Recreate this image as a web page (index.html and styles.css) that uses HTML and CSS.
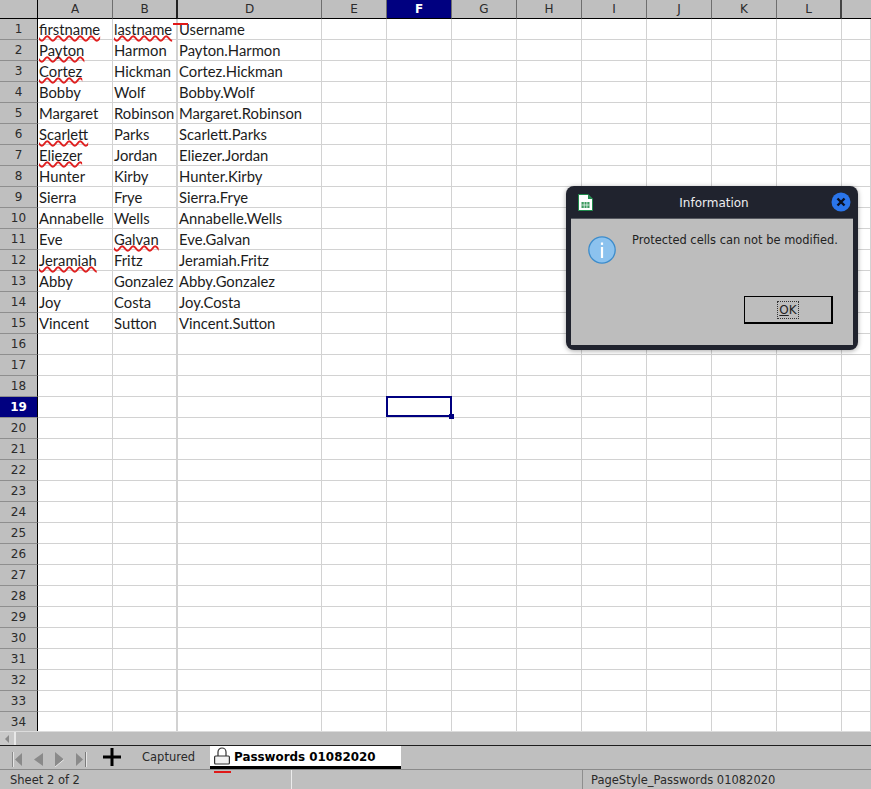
FILE: index.html
```html
<!DOCTYPE html>
<html lang="en">
<head>
    <meta charset="UTF-8">
    <title>Passwords 01082020 - Calc</title>
    <link rel="stylesheet" href="styles.css">
</head>
<body>
    <div class="sheet">
        <table class="grid">
            <colgroup>
                <col class="c-head"><col class="c-a"><col class="c-b"><col class="c-d">
                <col class="c-std"><col class="c-std"><col class="c-std"><col class="c-std">
                <col class="c-std"><col class="c-std"><col class="c-std"><col class="c-std"><col class="c-m">
            </colgroup>
            <thead>
                <tr><th class="corner"></th><th>A</th><th class="hid">B</th><th>D</th><th>E</th><th class="on">F</th><th>G</th><th>H</th><th>I</th><th>J</th><th>K</th><th class="lastcol">L</th><th></th></tr>
            </thead>
            <tbody>
                <tr><th>1</th><td><span class="typo">firstname</span></td><td class="hid"><span class="typo">lastname</span></td><td class="mark-cell"><span class="red-mark"></span>Username</td><td></td><td></td><td></td><td></td><td></td><td></td><td></td><td></td><td></td></tr>
                <tr><th>2</th><td><span class="typo">Payton</span></td><td class="hid">Harmon</td><td>Payton.Harmon</td><td></td><td></td><td></td><td></td><td></td><td></td><td></td><td></td><td></td></tr>
                <tr><th>3</th><td><span class="typo">Cortez</span></td><td class="hid">Hickman</td><td>Cortez.Hickman</td><td></td><td></td><td></td><td></td><td></td><td></td><td></td><td></td><td></td></tr>
                <tr><th>4</th><td>Bobby</td><td class="hid">Wolf</td><td>Bobby.Wolf</td><td></td><td></td><td></td><td></td><td></td><td></td><td></td><td></td><td></td></tr>
                <tr><th>5</th><td>Margaret</td><td class="hid">Robinson</td><td>Margaret.Robinson</td><td></td><td></td><td></td><td></td><td></td><td></td><td></td><td></td><td></td></tr>
                <tr><th>6</th><td><span class="typo">Scarlett</span></td><td class="hid">Parks</td><td>Scarlett.Parks</td><td></td><td></td><td></td><td></td><td></td><td></td><td></td><td></td><td></td></tr>
                <tr><th>7</th><td><span class="typo">Eliezer</span></td><td class="hid">Jordan</td><td>Eliezer.Jordan</td><td></td><td></td><td></td><td></td><td></td><td></td><td></td><td></td><td></td></tr>
                <tr><th>8</th><td>Hunter</td><td class="hid">Kirby</td><td>Hunter.Kirby</td><td></td><td></td><td></td><td></td><td></td><td></td><td></td><td></td><td></td></tr>
                <tr><th>9</th><td>Sierra</td><td class="hid">Frye</td><td>Sierra.Frye</td><td></td><td></td><td></td><td></td><td></td><td></td><td></td><td></td><td></td></tr>
                <tr><th>10</th><td>Annabelle</td><td class="hid">Wells</td><td>Annabelle.Wells</td><td></td><td></td><td></td><td></td><td></td><td></td><td></td><td></td><td></td></tr>
                <tr><th>11</th><td>Eve</td><td class="hid"><span class="typo">Galvan</span></td><td>Eve.Galvan</td><td></td><td></td><td></td><td></td><td></td><td></td><td></td><td></td><td></td></tr>
                <tr><th>12</th><td><span class="typo">Jeramiah</span></td><td class="hid">Fritz</td><td>Jeramiah.Fritz</td><td></td><td></td><td></td><td></td><td></td><td></td><td></td><td></td><td></td></tr>
                <tr><th>13</th><td>Abby</td><td class="hid">Gonzalez</td><td>Abby.Gonzalez</td><td></td><td></td><td></td><td></td><td></td><td></td><td></td><td></td><td></td></tr>
                <tr><th>14</th><td>Joy</td><td class="hid">Costa</td><td>Joy.Costa</td><td></td><td></td><td></td><td></td><td></td><td></td><td></td><td></td><td></td></tr>
                <tr><th>15</th><td>Vincent</td><td class="hid">Sutton</td><td>Vincent.Sutton</td><td></td><td></td><td></td><td></td><td></td><td></td><td></td><td></td><td></td></tr>
                <tr><th>16</th><td></td><td class="hid"></td><td></td><td></td><td></td><td></td><td></td><td></td><td></td><td></td><td></td><td></td></tr>
                <tr><th>17</th><td></td><td class="hid"></td><td></td><td></td><td></td><td></td><td></td><td></td><td></td><td></td><td></td><td></td></tr>
                <tr><th>18</th><td></td><td class="hid"></td><td></td><td></td><td></td><td></td><td></td><td></td><td></td><td></td><td></td><td></td></tr>
                <tr><th class="on">19</th><td></td><td class="hid"></td><td></td><td></td><td class="current"><span class="cursor"></span></td><td></td><td></td><td></td><td></td><td></td><td></td><td></td></tr>
                <tr><th>20</th><td></td><td class="hid"></td><td></td><td></td><td></td><td></td><td></td><td></td><td></td><td></td><td></td><td></td></tr>
                <tr><th>21</th><td></td><td class="hid"></td><td></td><td></td><td></td><td></td><td></td><td></td><td></td><td></td><td></td><td></td></tr>
                <tr><th>22</th><td></td><td class="hid"></td><td></td><td></td><td></td><td></td><td></td><td></td><td></td><td></td><td></td><td></td></tr>
                <tr><th>23</th><td></td><td class="hid"></td><td></td><td></td><td></td><td></td><td></td><td></td><td></td><td></td><td></td><td></td></tr>
                <tr><th>24</th><td></td><td class="hid"></td><td></td><td></td><td></td><td></td><td></td><td></td><td></td><td></td><td></td><td></td></tr>
                <tr><th>25</th><td></td><td class="hid"></td><td></td><td></td><td></td><td></td><td></td><td></td><td></td><td></td><td></td><td></td></tr>
                <tr><th>26</th><td></td><td class="hid"></td><td></td><td></td><td></td><td></td><td></td><td></td><td></td><td></td><td></td><td></td></tr>
                <tr><th>27</th><td></td><td class="hid"></td><td></td><td></td><td></td><td></td><td></td><td></td><td></td><td></td><td></td><td></td></tr>
                <tr><th>28</th><td></td><td class="hid"></td><td></td><td></td><td></td><td></td><td></td><td></td><td></td><td></td><td></td><td></td></tr>
                <tr><th>29</th><td></td><td class="hid"></td><td></td><td></td><td></td><td></td><td></td><td></td><td></td><td></td><td></td><td></td></tr>
                <tr><th>30</th><td></td><td class="hid"></td><td></td><td></td><td></td><td></td><td></td><td></td><td></td><td></td><td></td><td></td></tr>
                <tr><th>31</th><td></td><td class="hid"></td><td></td><td></td><td></td><td></td><td></td><td></td><td></td><td></td><td></td><td></td></tr>
                <tr><th>32</th><td></td><td class="hid"></td><td></td><td></td><td></td><td></td><td></td><td></td><td></td><td></td><td></td><td></td></tr>
                <tr><th>33</th><td></td><td class="hid"></td><td></td><td></td><td></td><td></td><td></td><td></td><td></td><td></td><td></td><td></td></tr>
                <tr><th>34</th><td></td><td class="hid"></td><td></td><td></td><td></td><td></td><td></td><td></td><td></td><td></td><td></td><td></td></tr>
            </tbody>
        </table>
    </div>

    <!-- horizontal scrollbar -->
    <div class="hscroll">
        <div class="hscroll-btn">
            <svg width="6" height="8" viewBox="0 0 6 8"><path d="M5 0v8L1 4z" fill="#8a8a8a"/></svg>
        </div>
        <div class="hscroll-thumb"></div>
    </div>

    <!-- sheet tabs -->
    <div class="tabbar">
        <div class="tab-nav">
            <svg width="11" height="15" viewBox="0 0 11 15"><path d="M0.5 0v15" stroke="#8a8a8a" fill="none"/><path d="M1.5 0v15" stroke="#e6e6e6" fill="none"/><path d="M10 1v13L3 7.5z" fill="#8a8a8a"/></svg>
            <svg width="10" height="15" viewBox="0 0 10 15"><path d="M9 1v13L0 7.5z" fill="#8a8a8a"/></svg>
            <svg width="10" height="15" viewBox="0 0 10 15"><path d="M0 0v15l9-7.5z" fill="#8a8a8a"/><path d="M0 15l9-7.5" stroke="#e6e6e6" fill="none"/></svg>
            <svg width="11" height="15" viewBox="0 0 11 15"><path d="M0 1v13l7-6.5z" fill="#8a8a8a"/><path d="M9.5 0v15" stroke="#7a7a7a" fill="none"/><path d="M10.5 0v15" stroke="#e6e6e6" fill="none"/></svg>
        </div>
        <svg class="tab-add" width="18" height="18" viewBox="0 0 18 18"><path d="M9 0v18M0 9h18" stroke="#000" stroke-width="3" fill="none"/></svg>
        <div class="tab">Captured</div>
        <div class="tab tab-active">
            <svg class="lock" width="16" height="18" viewBox="0 0 16 18">
                <path d="M4 9V5a4 4 0 0 1 8 0v4" fill="none" stroke="#333" stroke-width="1.2"/>
                <rect x="0.6" y="9" width="14.8" height="8" rx="1" fill="#f2f2f2" stroke="#333" stroke-width="1.2"/>
            </svg>
            <span class="tab-name">Passwords 01082020</span>
            <span class="lock-mark"></span>
        </div>
    </div>

    <!-- status bar -->
    <div class="statusbar">
        <div class="status-sheet">Sheet 2 of 2</div>
        <div class="status-gap"></div>
        <div class="status-style">PageStyle_Passwords 01082020</div>
    </div>

    <!-- message box -->
    <div class="dialog">
        <div class="dialog-title">
            <svg class="app-icon" width="15" height="17" viewBox="0 0 15 17">
                <path d="M0.5 0.5h9.5l4.5 4.5v11.5h-14z" fill="#fff" stroke="#1f8a4c"/>
                <path d="M10 0.5l4.5 4.5h-4.5z" fill="#1f8a4c"/>
                <rect x="3.5" y="8" width="8" height="6" fill="#3c9a5f"/>
                <path d="M6.2 8v6M8.9 8v6M3.5 11h8" stroke="#fff" stroke-width="0.7" fill="none"/>
            </svg>
            <span class="dialog-name">Information</span>
            <svg class="close-icon" width="20" height="20" viewBox="0 0 20 20">
                <circle cx="10" cy="10" r="9.5" fill="#2a75ea"/>
                <path d="M6.5 6.5l7 7M13.5 6.5l-7 7" stroke="#0b1020" stroke-width="2.4" fill="none"/>
            </svg>
        </div>
        <div class="dialog-body">
            <div class="dialog-msg">
                <svg width="28" height="28" viewBox="0 0 28 28">
                    <circle cx="14" cy="14" r="13.2" fill="#8cc2ee" stroke="#3d8ccb" stroke-width="1.3"/>
                    <rect x="12.9" y="11" width="2.2" height="11" fill="#fff"/>
                    <rect x="12.9" y="6.5" width="2.2" height="2.4" fill="#fff"/>
                </svg>
                <p>Protected cells can not be modified.</p>
            </div>
            <div class="dialog-actions">
                <button class="ok-btn" type="button"><span><u>O</u>K</span></button>
            </div>
        </div>
    </div>
</body>
</html>
```

FILE: styles.css
```css
/* General Styles */
html, body {
    margin: 0;
    padding: 0;
    height: 100%;
}
body {
    display: flex;
    flex-direction: column;
    height: 789px;
    overflow: hidden;
    position: relative;
    background-color: #bfbfbf;
    font-family: "DejaVu Sans", sans-serif;
    font-size: 11px;
    color: #2a2a2a;
}

/* Grid */
.sheet {
    height: 731px;
    flex: none;
    overflow: hidden;
    background-color: #fff;
}
.grid {
    border-collapse: separate;
    border-spacing: 0;
    table-layout: fixed;
    width: 871px;
}
.c-head { width: 38px; }
.c-a { width: 75px; }
.c-b { width: 65px; }
.c-d { width: 144px; }
.c-std { width: 65px; }
.c-m { width: 29px; }
.grid th {
    box-sizing: border-box;
    padding: 0;
    background-color: #bfbfbf;
    font-weight: normal;
    font-size: 12px;
    color: #2b2b2b;
    text-align: center;
    overflow: hidden;
}
.grid thead th {
    height: 19px;
    border-right: 1px solid #6e6e6e;
    border-bottom: 1px solid #000;
}
.grid thead th:first-child {
    border-right-color: #000;
}
.grid thead th.hid {
    border-right: 2px solid #222;
}
.grid thead th.lastcol {
    border-right: 2px solid #444;
}
.grid thead th:last-child {
    border-right: none;
}
.grid tbody th {
    height: 21px;
    border-right: 1px solid #000;
    border-bottom: 1px solid #8e8e8e;
}
.grid .on,
.grid thead th.on {
    background-color: #000080;
    color: #fff;
    font-weight: bold;
}
.grid td {
    box-sizing: border-box;
    height: 21px;
    padding: 1px 0 0 1px;
    border-right: 1px solid #d2d2d2;
    border-bottom: 1px solid #d2d2d2;
    font-family: "Lato", sans-serif;
    font-size: 14.8px;
    line-height: 18px;
    color: #1c1c1c;
    white-space: nowrap;
    vertical-align: top;
    overflow: visible;
}
.grid td.hid {
    border-right: 2px solid #d2d2d2;
}
.typo {
    text-decoration: underline wavy #e02020 1.5px;
    text-decoration-skip-ink: none;
    text-underline-offset: 0;
}

/* Overlays in the grid */
.mark-cell,
.current {
    position: relative;
}
.red-mark {
    position: absolute;
    left: -5px;
    top: 4px;
    width: 15px;
    height: 2px;
    background-color: #e01818;
}
.cursor {
    position: absolute;
    left: -1px;
    top: -1px;
    width: 66px;
    height: 21px;
    box-sizing: border-box;
    border: 2px solid #000080;
}
.cursor::after {
    content: "";
    position: absolute;
    right: -4px;
    bottom: -4px;
    width: 5px;
    height: 5px;
    background-color: #000080;
}

/* Scrollbar */
.hscroll {
    box-sizing: border-box;
    display: flex;
    height: 15px;
    flex: none;
    border-top: 1px solid #dcdcdc;
    border-bottom: 1px solid #1e1e1e;
    background-color: #bdbdbd;
}
.hscroll-btn {
    width: 14px;
    display: flex;
    align-items: center;
    justify-content: center;
    background-color: #c9c9c9;
}
.hscroll-thumb {
    width: 2px;
    background-color: #e8e8e8;
}

/* Tabs */
.tabbar {
    box-sizing: border-box;
    display: flex;
    align-items: flex-start;
    height: 24px;
    flex: none;
    border-bottom: 1px solid #8a8a8a;
    background-color: #bfbfbf;
    position: relative;
}
.tab-nav {
    display: flex;
    gap: 11px;
    padding: 6px 0 0 12px;
    width: 103px;
    box-sizing: border-box;
    flex: none;
}
.tab-add {
    flex: none;
    margin: 2px 0 0 0;
}
.tab {
    margin: 3px 0 0 21px;
    width: 68px;
    font-size: 11.5px;
    line-height: 16px;
    white-space: nowrap;
    flex: none;
}
.tab-active {
    position: relative;
    box-sizing: border-box;
    display: flex;
    gap: 4px;
    align-items: flex-start;
    width: 191px;
    height: 23px;
    margin: 0;
    padding: 1px 0 0 4px;
    background-color: #fff;
    border-bottom: 3px solid #000;
    color: #000;
    font-weight: bold;
    font-size: 11.9px;
    line-height: 18px;
}
.tab-name {
    padding-top: 1px;
}
.lock-mark {
    position: absolute;
    left: 4px;
    top: 25px;
    width: 17px;
    height: 2px;
    background-color: #e01818;
}

/* Status bar */
.statusbar {
    display: flex;
    flex: 1;
    align-items: center;
    font-size: 11.5px;
    background-color: #bfbfbf;
}
.status-sheet {
    box-sizing: border-box;
    width: 292px;
    padding-left: 10px;
    border-right: 1px solid #ececec;
    line-height: 20px;
    white-space: nowrap;
}
.status-gap {
    box-sizing: border-box;
    width: 291px;
    height: 20px;
    border-right: 1px solid #8e8e8e;
}
.status-style {
    padding-left: 8px;
    white-space: nowrap;
}

/* Message box */
.dialog {
    position: absolute;
    left: 566px;
    top: 186px;
    width: 292px;
    height: 164px;
    box-sizing: border-box;
    display: flex;
    flex-direction: column;
    padding: 0 5px 5px;
    border-radius: 8px;
    background-color: #20232e;
    box-shadow: 0 1px 5px rgba(0, 0, 0, 0.35);
}
.dialog-title {
    display: flex;
    align-items: center;
    justify-content: space-between;
    height: 32px;
    flex: none;
    padding: 0 2px 0 7px;
    color: #eeeef0;
    font-size: 12px;
}
.dialog-name {
    margin: 1px 0 0 4px;
}
.dialog-body {
    flex: 1;
    display: flex;
    flex-direction: column;
    background-color: #bdbdbd;
    border-top: 1px solid #55585f;
    color: #222;
}
.dialog-msg {
    display: flex;
    gap: 16px;
    padding: 17px 0 0 17px;
    height: 60px;
}
.dialog-msg p {
    margin: -3px 0 0;
    font-size: 11.45px;
    line-height: 14px;
    white-space: nowrap;
}
.dialog-actions {
    display: flex;
    justify-content: flex-end;
    padding-right: 20px;
}
.ok-btn {
    box-sizing: border-box;
    width: 89px;
    height: 28px;
    padding: 0;
    background-color: #bdbdbd;
    border: 1px solid #000;
    border-right-width: 2px;
    border-bottom-width: 2px;
    font-family: inherit;
    font-size: 12px;
    color: #222;
}
.ok-btn span {
    display: inline-block;
    padding: 1px 1px;
    outline: 1px dotted #333;
}
```
